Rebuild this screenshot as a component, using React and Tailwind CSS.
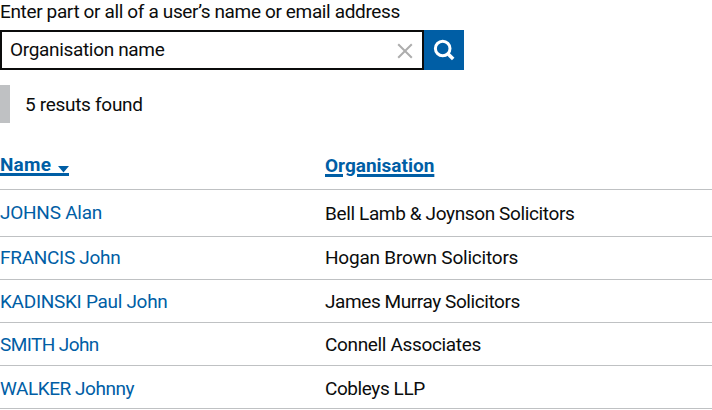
const results = [
  { name: 'JOHNS Alan', nameClass: 'tracking-[-0.25px]', org: 'Bell Lamb & Joynson Solicitors', row: 'h-[47px] pt-[11px]', orgClass: 'pt-px tracking-[-0.37px]' },
  { name: 'FRANCIS John', nameClass: 'tracking-[-0.29px]', org: 'Hogan Brown Solicitors', row: 'h-[43px] pt-[9px]', orgClass: 'tracking-[-0.22px]' },
  { name: 'KADINSKI Paul John', nameClass: 'tracking-[-0.3px]', org: 'James Murray Solicitors', row: 'h-[43px] pt-[10px]', orgClass: 'tracking-[-0.42px]' },
  { name: 'SMITH John', nameClass: 'tracking-[-0.6px]', org: 'Connell Associates', row: 'h-[43px] pt-[10px]', orgClass: 'tracking-[-0.34px]' },
  { name: 'WALKER Johnny', nameClass: 'tracking-[-0.45px]', org: 'Cobleys LLP', row: 'h-[43px] pt-[11px]', orgClass: 'tracking-[-0.42px]' },
];

export default function App() {
  return (
    <div className="h-[410px] w-[712px] overflow-hidden bg-white font-['Roboto',sans-serif] text-[19px] leading-6 text-[#0b0c0c]">
      <label className="block h-[30px] leading-6 tracking-[-0.36px] whitespace-nowrap">Enter part or all of a user’s name or email address</label>
      <div className="flex h-10 w-[464px]">
        <div className="flex w-[424px] items-center justify-between border-2 border-[#0b0c0c] pr-[9px] pl-2">
          <span className="tracking-[-0.33px] whitespace-nowrap">Organisation name</span>
          <svg className="mt-[2px] size-4" viewBox="0 0 16 16" fill="none" stroke="#adadad" strokeWidth="2">
            <path d="M1.2 1.2 14.8 14.8M14.8 1.2 1.2 14.8" />
          </svg>
        </div>
        <button className="flex h-10 w-10 items-center justify-center bg-[#005ea5]" aria-label="Search">
          <svg className="size-10" viewBox="0 0 40 40" fill="none" stroke="#fff" strokeWidth="3">
            <circle cx="18.7" cy="18.5" r="7.3" />
            <path d="M23.4 23.2 29.2 29" strokeWidth="3.6" />
          </svg>
        </button>
      </div>
      <div className="mt-[15px] h-[38px] border-l-10 border-[#bfc1c3] pl-[15px] leading-10 tracking-[-0.3px]">5 resuts found</div>

      <div className="mt-[29px] flex h-[38px] border-b border-[#bfc1c3] font-bold text-[#005ea5]">
        <div className="w-[325px]">
          <a className="flex h-6 w-[69px] border-b-3 border-[#005ea5]">
            <span className="leading-[26px] tracking-[0.2px]">Name</span>
            <svg className="mt-[14px] ml-auto h-[7px] w-[11px]" viewBox="0 0 11 7" fill="#005ea5">
              <path d="M0 0h11L5.5 6.5z" />
            </svg>
          </a>
        </div>
        <div className="pt-[2px]">
          <a className="underline decoration-3 underline-offset-2">Organisation</a>
        </div>
      </div>
      {results.map((r) => (
        <div key={r.name} className={`flex border-b border-[#bfc1c3] whitespace-nowrap ${r.row}`}>
          <a className={`w-[325px] text-[#005ea5] ${r.nameClass}`}>{r.name}</a>
          <span className={r.orgClass}>{r.org}</span>
        </div>
      ))}
    </div>
  );
}
